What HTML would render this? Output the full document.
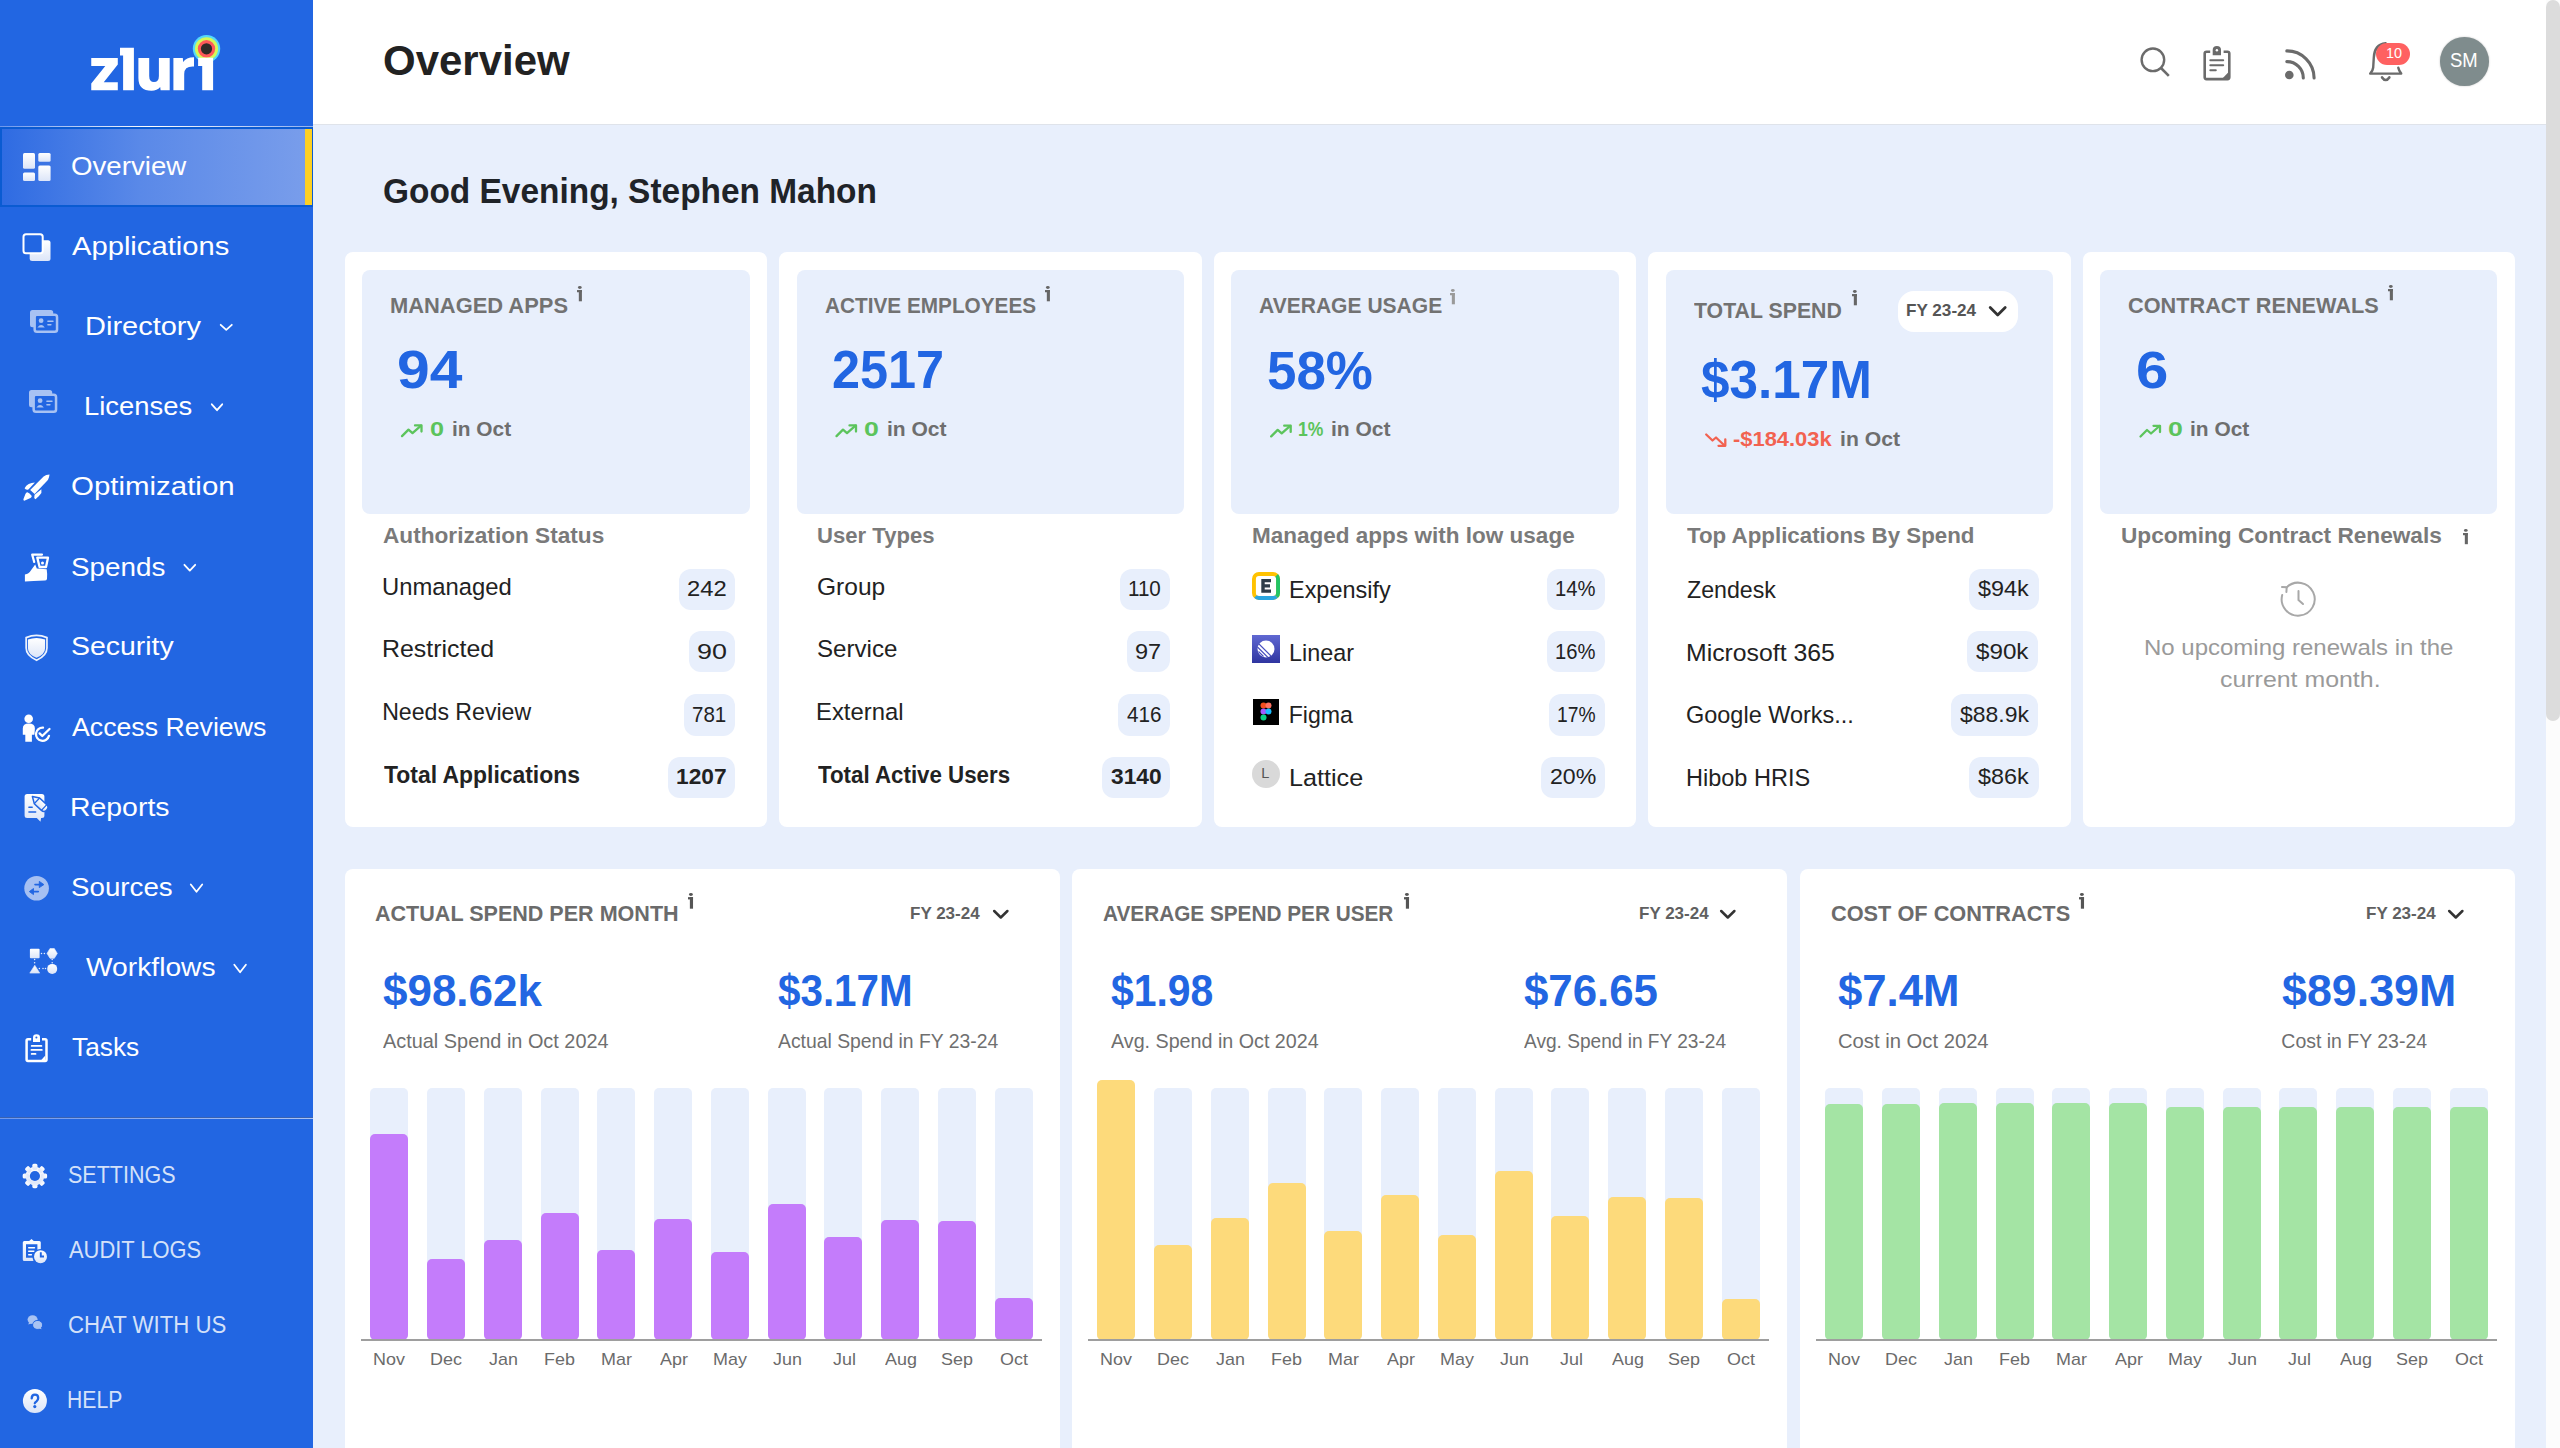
<!DOCTYPE html>
<html><head><meta charset="utf-8"><style>
html,body{margin:0;padding:0;}
body{width:2560px;height:1448px;overflow:hidden;position:relative;background:#e8effc;font-family:"Liberation Sans",sans-serif;}
.t{position:absolute;line-height:1;white-space:nowrap;transform-origin:0 0;}
.r{position:absolute;}
svg.r{overflow:visible;}
</style></head><body>
<div class="r" style="left:0px;top:0px;width:313px;height:1448px;background:#2266e2;"></div>
<div class="r" style="left:313px;top:0px;width:2233px;height:124px;background:#fff;"></div>
<div class="r" style="left:313px;top:124px;width:2233px;height:1px;background:#dfe3ea;"></div>
<div class="r" style="left:2546px;top:0px;width:14px;height:1448px;background:#fcfcfc;"></div>
<div class="r" style="left:2546px;top:0px;width:14px;height:721px;background:#dcdcdc;border-radius:7px;"></div>
<svg class="r" style="left:85px;top:30px" width="140" height="70" viewBox="0 0 140 70">
<g transform="translate(-85,-30)">
<circle cx="206.5" cy="48.8" r="13.7" fill="#55d9f8"/>
<circle cx="206.5" cy="48.8" r="11.6" fill="#d4f858"/>
<circle cx="206.5" cy="48.8" r="8.7" fill="#ff5859"/>
<circle cx="206.5" cy="48.8" r="5.6" fill="#2f2a27"/>
<polygon fill="#fff" points="91.25,58.1 117.8,58.1 117.8,64.4 103.75,82.2 117.8,82.2 117.8,90.3 91.25,90.3 91.25,83.4 105.3,66 91.25,66"/>
<polygon fill="#fff" points="120,47.8 133.9,47.8 133.9,90.3 123.1,90.3 123.1,55.6 120,55.6"/>
<path fill="#fff" d="M138.4,58.1 H149.2 V76 Q149.2,82 154,82 Q158.9,82 158.9,76 V58.1 H169.7 V90.3 H160.6 L160.2,87 Q157,90.8 151.5,90.8 Q138.4,90.8 138.4,78 Z"/>
<path fill="#fff" d="M173.4,58.1 H182.8 L183.2,62 Q186,57.3 194,57.3 V66.6 Q184.2,66 184.2,74 V90.3 H173.4 Z"/>
<polygon fill="#fff" points="198.1,57.7 213.1,57.7 213.1,90.3 202.2,90.3 202.2,66 198.1,66"/>
</g></svg>
<div class="r" style="left:0px;top:126px;width:313px;height:1px;background:linear-gradient(90deg,#6a96ec,#ffffff 48%,#8fb0f0);"></div>
<div class="r" style="left:0px;top:127px;width:313px;height:80px;background:linear-gradient(90deg,#2e6be2,#5a89e8 45%,#7a9eeb);box-shadow:inset 0 0 0 2px #0a5bd2;"></div>
<div class="r" style="left:305px;top:129px;width:7px;height:76px;background:#fdd023;"></div>
<svg class="r" style="left:20px;top:150px" width="34" height="34" viewBox="0 0 34 34"><defs><linearGradient id="wg" x1="0" y1="0" x2="0" y2="1"><stop offset="0" stop-color="#fff"/><stop offset="1" stop-color="#dce5f8"/></linearGradient></defs><g transform="translate(-20,-150)" fill="url(#wg)"><rect x="23" y="153" width="12" height="15.8" rx="1.5"/><rect x="38.3" y="153" width="12.3" height="8.7" rx="1.5"/><rect x="23" y="172.5" width="12" height="8.5" rx="1.5"/><rect x="38.3" y="165.5" width="12.3" height="15.5" rx="1.5"/></g></svg>
<svg class="r" style="left:20px;top:230px" width="34" height="34" viewBox="0 0 34 34"><g transform="translate(-20,-230)"><rect x="29.7" y="240.3" width="20.8" height="20.8" rx="2.5" fill="url(#wg)"/><rect x="23.5" y="234.2" width="19.2" height="19" rx="2.5" fill="#2266e2" stroke="#fff" stroke-width="2"/></g></svg>
<svg class="r" style="left:27.7px;top:308px" width="34" height="30" viewBox="0 0 34 30"><g transform="translate(2,2)"><rect x="0" y="0" width="23.2" height="17.2" rx="2.5" fill="#a8c2f3"/><rect x="4.65" y="4.85" width="22.4" height="16.9" rx="2.3" fill="#2266e2" stroke="#a8c2f3" stroke-width="2.5"/><circle cx="11.1" cy="10.7" r="2.4" fill="#a8c2f3"/><path d="M7.4,17.5 Q11.1,12.6 14.8,17.5 Z" fill="#a8c2f3"/><rect x="17.2" y="10.4" width="6.5" height="1.5" rx="0.7" fill="#a8c2f3"/><rect x="17.2" y="14.1" width="4.4" height="1.4" rx="0.7" fill="#a8c2f3"/></g></svg>
<svg class="r" style="left:27.4px;top:387.9px" width="34" height="30" viewBox="0 0 34 30"><g transform="translate(2,2)"><rect x="0" y="0" width="23.2" height="17.2" rx="2.5" fill="#a8c2f3"/><rect x="4.65" y="4.85" width="22.4" height="16.9" rx="2.3" fill="#2266e2" stroke="#a8c2f3" stroke-width="2.5"/><circle cx="11.1" cy="10.7" r="2.4" fill="#a8c2f3"/><path d="M7.4,17.5 Q11.1,12.6 14.8,17.5 Z" fill="#a8c2f3"/><rect x="17.2" y="10.4" width="6.5" height="1.5" rx="0.7" fill="#a8c2f3"/><rect x="17.2" y="14.1" width="4.4" height="1.4" rx="0.7" fill="#a8c2f3"/></g></svg>
<svg class="r" style="left:20px;top:470px" width="34" height="34" viewBox="0 0 34 34"><g transform="translate(-20,-470)" fill="#fff"><path d="M30.2,489.9 L43.6,476.5 Q46,474.8 49.5,474.6 Q49.3,477.8 47.9,479.9 L34.6,493.9 Z"/><path d="M24.6,488.3 Q26,485.5 28.7,484 Q31.5,482.6 34.9,482.4 L28.4,489.5 Q25.6,490.2 24.6,488.3 Z"/><path d="M41.4,489.2 L41.4,493 Q39,496.5 35.5,499.2 Q34.2,498.8 34.3,497.6 L34.6,494.8 Z"/><path d="M27.4,492.3 Q29.5,493 31.8,496.1 Q31.5,497.6 30.5,498 L24.3,500.7 Q23.2,500.3 23.4,499.2 L25.3,494.2 Q26,492.3 27.4,492.3 Z"/></g></svg>
<svg class="r" style="left:20px;top:550px" width="34" height="34" viewBox="0 0 34 34"><g transform="translate(-20,-550)"><path d="M42,554.6 L32.2,554.6 L34.2,562" fill="none" stroke="#fff" stroke-width="2.2" stroke-linecap="round" stroke-linejoin="round"/><path d="M37.3,557.7 L48,557.7 L46,567 L39.6,567 Z" fill="none" stroke="#fff" stroke-width="2.3" stroke-linejoin="round"/><circle cx="42.5" cy="563" r="1.5" fill="#fff"/><path d="M24.9,574.5 Q27,574 28,573.6 Q30,572 31.2,569.9 L35.2,564.6 L36.8,568.6 L46.7,569.2 Q47.5,574 47,578.9 Q46.5,580.4 44.8,580.4 L33.6,581 L24.9,581.4 Z" fill="#fff"/></g></svg>
<svg class="r" style="left:20px;top:630px" width="34" height="34" viewBox="0 0 34 34"><defs><linearGradient id="wg" x1="0" y1="0" x2="0" y2="1"><stop offset="0" stop-color="#fff"/><stop offset="1" stop-color="#dce5f8"/></linearGradient></defs><g transform="translate(-20,-630)"><path d="M26.15,637.6 Q36.5,633.3 46.95,637.6 V648 Q46.95,655.6 36.6,660.2 Q26.15,655.6 26.15,648 Z" fill="none" stroke="#eef3fd" stroke-width="1.7"/><path d="M27.9,639.6 Q36.5,636.2 45.1,639.6 V648 Q45.1,654.4 36.5,657.8 Q27.9,654.4 27.9,648 Z" fill="url(#wg)"/></g></svg>
<svg class="r" style="left:18px;top:712px" width="36" height="34" viewBox="0 0 36 34"><g transform="translate(-18,-712)"><circle cx="28.7" cy="718.7" r="4.3" fill="#fff"/><path d="M22.8,734.8 V728.6 Q22.8,723.6 28.8,723.6 Q34.9,723.6 34.9,728.6 L34.4,734.8 H31.9 V741.7 H25.3 V734.8 Z" fill="#fff"/><path d="M43,727.6 A6.6,6.6 0 1 0 49,735.8" fill="none" stroke="#fff" stroke-width="2.3" stroke-linecap="round"/><path d="M39.6,733.4 L42.3,736 L49.5,729" fill="none" stroke="#fff" stroke-width="2.3" stroke-linecap="round" stroke-linejoin="round"/></g></svg>
<svg class="r" style="left:20px;top:790px" width="34" height="34" viewBox="0 0 34 34"><defs><linearGradient id="wg" x1="0" y1="0" x2="0" y2="1"><stop offset="0" stop-color="#fff"/><stop offset="1" stop-color="#dce5f8"/></linearGradient></defs><g transform="translate(-20,-790)"><path d="M27.1,794 L41.9,794 Q44.4,794 44.4,796.5 L44.4,815.6 Q44.4,818.1 41.9,818.1 L41.1,818.1 L40.5,821.7 L36.8,818.1 L27.1,818.1 Q24.6,818.1 24.6,815.6 L24.6,796.5 Q24.6,794 27.1,794 Z" fill="url(#wg)"/><rect x="28.2" y="806.4" width="4.7" height="1.5" rx="0.7" fill="#2266e2"/><rect x="28.2" y="811.3" width="8.2" height="1.5" rx="0.7" fill="#2266e2"/><g transform="translate(32.4,796.6) rotate(43)"><path d="M0,0 L6.2,-3.9 H16 Q19.6,-3.9 19.6,0 Q19.6,3.9 16,3.9 H6.2 Z" fill="url(#wg)" stroke="#2266e2" stroke-width="1.5" stroke-linejoin="round"/><path d="M6.2,-3.9 V3.9 M16,-3.9 V3.9" stroke="#2266e2" stroke-width="1.3"/></g></g></svg>
<svg class="r" style="left:20px;top:872px" width="34" height="34" viewBox="0 0 34 34"><g transform="translate(-20,-872)"><circle cx="36.6" cy="888.2" r="12.3" fill="#a6c0f2"/><path d="M35,884.6 H40" stroke="#2266e2" stroke-width="1.6" stroke-linecap="round"/><path d="M39.3,881.4 L43.9,884.6 L39.3,887.6 Z" fill="#2266e2" stroke="#2266e2" stroke-width="0.9" stroke-linejoin="round"/><path d="M33,891.6 H38.3" stroke="#2266e2" stroke-width="1.6" stroke-linecap="round"/><path d="M33.5,888.5 L29.3,891.6 L33.5,894.6 Z" fill="#2266e2" stroke="#2266e2" stroke-width="0.9" stroke-linejoin="round"/></g></svg>
<svg class="r" style="left:26px;top:945px" width="36" height="34" viewBox="0 0 36 34"><defs><linearGradient id="wg" x1="0" y1="0" x2="0" y2="1"><stop offset="0" stop-color="#fff"/><stop offset="1" stop-color="#dce5f8"/></linearGradient></defs><g transform="translate(-26,-945)"><rect x="29.9" y="948.7" width="9.7" height="9.5" rx="1" fill="url(#wg)"/><path d="M50,948.5 L54.3,948.5 L57.3,953.4 L54.3,958.3 L50,958.3 L47,953.4 Z" fill="url(#wg)" stroke="#e8eefb" stroke-width="0.6" stroke-linejoin="round"/><path d="M34.8,965.2 L39.7,973.1 L29.8,973.1 Z" fill="url(#wg)" stroke="#e2e9f9" stroke-width="0.6" stroke-linejoin="round"/><circle cx="52.2" cy="968.9" r="5" fill="url(#wg)"/><g fill="#e6edfb"><circle cx="41.5" cy="953.4" r="0.75"/><circle cx="44.4" cy="953.4" r="0.75"/><circle cx="34.6" cy="959.6" r="0.75"/><circle cx="34.6" cy="962.7" r="0.75"/><circle cx="52.2" cy="959.6" r="0.75"/><circle cx="52.2" cy="962.7" r="0.75"/><circle cx="39.4" cy="968.6" r="0.75"/><circle cx="43" cy="968.6" r="0.75"/><circle cx="45.5" cy="968.6" r="0.75"/></g></g></svg>
<svg class="r" style="left:20px;top:1030px" width="34" height="36" viewBox="0 0 34 36"><g transform="translate(-20,-1030)" fill="#fff"><path d="M31.2,1039.3 H28 Q26.6,1039.3 26.6,1040.7 V1059.5 Q26.6,1060.9 28,1060.9 H45.1 Q46.5,1060.9 46.5,1059.5 V1040.7 Q46.5,1039.3 45.1,1039.3 H42" fill="none" stroke="#fff" stroke-width="2.5"/><path d="M33,1041.9 V1037.6 Q33,1034.3 36.5,1034.3 Q40,1034.3 40,1037.6 V1041.9 Z"/><circle cx="36.4" cy="1037.6" r="1" fill="#2266e2"/><rect x="30.8" y="1045" width="11.5" height="1.8" rx="0.9"/><rect x="30.5" y="1049" width="12.2" height="1.8" rx="0.9"/><rect x="30.8" y="1053" width="5.6" height="1.8" rx="0.9"/><path d="M45.3,1055.6 L45.3,1060 L41.3,1060 Z"/></g></svg>
<div class="r" style="left:0px;top:1117px;width:313px;height:1px;background:#3a62b0;"></div>
<div class="r" style="left:0px;top:1118px;width:313px;height:1px;background:linear-gradient(90deg,#6f98ee,#a8c2f5);"></div>
<svg class="r" style="left:20px;top:1160px" width="34" height="34" viewBox="0 0 34 34"><defs><linearGradient id="wg" x1="0" y1="0" x2="0" y2="1"><stop offset="0" stop-color="#fff"/><stop offset="1" stop-color="#dce5f8"/></linearGradient></defs><g transform="translate(14.9,16)" fill="url(#wg)"><circle r="9.3"/><rect x="-2.6" y="-12.2" width="5.2" height="6" rx="1.6" transform="rotate(0)"/><rect x="-2.6" y="-12.2" width="5.2" height="6" rx="1.6" transform="rotate(45)"/><rect x="-2.6" y="-12.2" width="5.2" height="6" rx="1.6" transform="rotate(90)"/><rect x="-2.6" y="-12.2" width="5.2" height="6" rx="1.6" transform="rotate(135)"/><rect x="-2.6" y="-12.2" width="5.2" height="6" rx="1.6" transform="rotate(180)"/><rect x="-2.6" y="-12.2" width="5.2" height="6" rx="1.6" transform="rotate(225)"/><rect x="-2.6" y="-12.2" width="5.2" height="6" rx="1.6" transform="rotate(270)"/><rect x="-2.6" y="-12.2" width="5.2" height="6" rx="1.6" transform="rotate(315)"/><circle r="5.1" fill="#2266e2"/></g></svg>
<svg class="r" style="left:20px;top:1235px" width="34" height="34" viewBox="0 0 34 34"><defs><linearGradient id="wg" x1="0" y1="0" x2="0" y2="1"><stop offset="0" stop-color="#fff"/><stop offset="1" stop-color="#dce5f8"/></linearGradient></defs><g transform="translate(-20,-1235)"><path d="M24.3,1240.9 H29.2 L31.5,1238.9 L33.8,1240.9 H39.3 Q40.8,1240.9 40.8,1242.4 V1250 L37.4,1252 V1244.3 H26 V1257.7 H32.5 L33.5,1261.1 H24.3 Q22.8,1261.1 22.8,1259.6 V1242.4 Q22.8,1240.9 24.3,1240.9 Z" fill="url(#wg)"/><rect x="28" y="1247" width="7.2" height="1.5" rx="0.7" fill="#fff"/><rect x="28" y="1250.4" width="6.6" height="1.5" rx="0.7" fill="#fff"/><rect x="28" y="1254" width="4.1" height="1.5" rx="0.7" fill="#fff"/><circle cx="40.5" cy="1256.7" r="7.6" fill="#2266e2"/><circle cx="40.5" cy="1256.7" r="6.5" fill="url(#wg)"/><path d="M40.8,1252.3 V1256.5 H44" fill="none" stroke="#2266e2" stroke-width="1.9"/></g></svg>
<svg class="r" style="left:24px;top:1312px" width="22" height="22" viewBox="0 0 22 22"><g transform="translate(-24,-1312)" fill="#a9c3f3"><ellipse cx="32.6" cy="1319.6" rx="5" ry="4.3"/><path d="M29,1322.5 L28.3,1324.6 L31.5,1323.5 Z"/><g stroke="#2266e2" stroke-width="1.1"><ellipse cx="37.6" cy="1324.9" rx="4.8" ry="4.3"/></g><ellipse cx="37.6" cy="1324.9" rx="4.4" ry="3.9"/><path d="M40.5,1327 L41.6,1329.3 L38.6,1328.3 Z"/></g></svg>
<svg class="r" style="left:20px;top:1385px" width="34" height="34" viewBox="0 0 34 34"><defs><linearGradient id="wg" x1="0" y1="0" x2="0" y2="1"><stop offset="0" stop-color="#fff"/><stop offset="1" stop-color="#dce5f8"/></linearGradient></defs><g transform="translate(-20,-1385)"><circle cx="34.9" cy="1400.9" r="12" fill="url(#wg)"/><path d="M31.7,1398.4 Q31.7,1394.7 34.9,1394.7 Q38.2,1394.7 38.2,1397.9 Q38.2,1399.9 36.5,1401.3 Q34.8,1402.6 34.8,1403.3" fill="none" stroke="#2266e2" stroke-width="2.3" stroke-linecap="round"/><circle cx="34.8" cy="1406.6" r="1.6" fill="#2266e2"/></g></svg>
<div class="t" style="left:71.36px;top:152.75px;font-size:26.16px;font-weight:400;color:#fff;transform:scaleX(1.0572);">Overview</div>
<div class="t" style="left:72.30px;top:233.15px;font-size:26.16px;font-weight:400;color:#fff;transform:scaleX(1.1149);">Applications</div>
<div class="t" style="left:84.98px;top:313.35px;font-size:26.16px;font-weight:400;color:#fff;transform:scaleX(1.1086);">Directory</div>
<div class="t" style="left:84.41px;top:393.15px;font-size:26.16px;font-weight:400;color:#fff;transform:scaleX(1.0469);">Licenses</div>
<div class="t" style="left:70.77px;top:472.85px;font-size:26.16px;font-weight:400;color:#fff;transform:scaleX(1.1256);">Optimization</div>
<div class="t" style="left:70.85px;top:553.65px;font-size:26.16px;font-weight:400;color:#fff;transform:scaleX(1.0635);">Spends</div>
<div class="t" style="left:70.72px;top:633.25px;font-size:26.16px;font-weight:400;color:#fff;transform:scaleX(1.0872);">Security</div>
<div class="t" style="left:72.40px;top:713.85px;font-size:26.16px;font-weight:400;color:#fff;transform:scaleX(1.0203);">Access Reviews</div>
<div class="t" style="left:70.13px;top:793.85px;font-size:26.16px;font-weight:400;color:#fff;transform:scaleX(1.0863);">Reports</div>
<div class="t" style="left:71.15px;top:874.05px;font-size:26.16px;font-weight:400;color:#fff;transform:scaleX(1.0594);">Sources</div>
<div class="t" style="left:86.36px;top:954.25px;font-size:26.16px;font-weight:400;color:#fff;transform:scaleX(1.0783);">Workflows</div>
<div class="t" style="left:71.87px;top:1034.35px;font-size:26.16px;font-weight:400;color:#fff;transform:scaleX(1.0060);">Tasks</div>
<svg class="r" style="left:217px;top:322px" width="17" height="11" viewBox="0 0 17 11"><path d="M3.7000000000000055,2.8 L9.25,7.899999999999989 L14.799999999999994,2.8" fill="none" stroke="#fff" stroke-width="1.8" stroke-linecap="round" stroke-linejoin="round"/></svg>
<svg class="r" style="left:209px;top:401px" width="17" height="12" viewBox="0 0 17 12"><path d="M2.8,3.3 L8.0,9.2 L13.2,3.3" fill="none" stroke="#fff" stroke-width="1.8" stroke-linecap="round" stroke-linejoin="round"/></svg>
<svg class="r" style="left:181px;top:562px" width="17" height="12" viewBox="0 0 17 12"><path d="M3.399999999999994,2.8 L8.800000000000011,8.599999999999977 L14.2,2.8" fill="none" stroke="#fff" stroke-width="1.8" stroke-linecap="round" stroke-linejoin="round"/></svg>
<svg class="r" style="left:188px;top:881px" width="18" height="13" viewBox="0 0 18 13"><path d="M2.8,3.5000000000000453 L8.5,10.800000000000022 L14.2,3.5000000000000453" fill="none" stroke="#fff" stroke-width="1.8" stroke-linecap="round" stroke-linejoin="round"/></svg>
<svg class="r" style="left:231px;top:961px" width="18" height="14" viewBox="0 0 18 14"><path d="M3.3,3.699999999999977 L9.099999999999994,11.2 L14.899999999999988,3.699999999999977" fill="none" stroke="#fff" stroke-width="1.8" stroke-linecap="round" stroke-linejoin="round"/></svg>
<div class="t" style="left:67.73px;top:1164.21px;font-size:23.26px;font-weight:400;color:#d4e1f9;transform:scaleX(0.9248);">SETTINGS</div>
<div class="t" style="left:68.70px;top:1239.11px;font-size:23.26px;font-weight:400;color:#d4e1f9;transform:scaleX(0.9411);">AUDIT LOGS</div>
<div class="t" style="left:67.59px;top:1313.81px;font-size:23.26px;font-weight:400;color:#d4e1f9;transform:scaleX(0.9554);">CHAT WITH US</div>
<div class="t" style="left:67.01px;top:1388.51px;font-size:23.26px;font-weight:400;color:#d4e1f9;transform:scaleX(0.9103);">HELP</div>
<div class="t" style="left:383.12px;top:39.25px;font-size:42.59px;font-weight:700;color:#222;transform:scaleX(0.9856);">Overview</div>
<svg class="r" style="left:2135px;top:42px" width="40" height="40" viewBox="0 0 40 40"><g transform="translate(-2135,-42)" fill="none" stroke="#6b6b6b" stroke-width="2.4"><circle cx="2152.9" cy="59.8" r="11.3"/><path d="M2161,68 L2168.8,75.8" stroke-linecap="butt" stroke-width="2.6"/></g></svg>
<svg class="r" style="left:2198px;top:42px" width="40" height="44" viewBox="0 0 40 44"><g transform="translate(-2198,-42)" fill="#6b6b6b"><path d="M2210.2,51.7 H2206.5 Q2204.7,51.7 2204.7,53.5 V77.3 Q2204.7,79.1 2206.5,79.1 H2227.5 Q2229.3,79.1 2229.3,77.3 V53.5 Q2229.3,51.7 2227.5,51.7 H2223.6" fill="none" stroke="#6b6b6b" stroke-width="2.6"/><path d="M2212.7,55.2 V50 Q2212.7,46.1 2216.9,46.1 Q2221,46.1 2221,50 V55.2 Z"/><circle cx="2216.9" cy="50.3" r="1.2" fill="#fff"/><rect x="2209.3" y="59.2" width="14.9" height="2" rx="1"/><rect x="2209.3" y="64.2" width="14.9" height="2" rx="1"/><rect x="2209.3" y="69.3" width="7.5" height="2" rx="1"/><path d="M2228.2,72.5 V78.2 H2222.6 Z"/></g></svg>
<svg class="r" style="left:2280px;top:44px" width="42" height="42" viewBox="0 0 42 42"><g transform="translate(-2280,-44)" fill="none" stroke="#6b6b6b" stroke-width="3.1" stroke-linecap="round"><circle cx="2289.3" cy="75" r="4.3" fill="#6b6b6b" stroke="none"/><path d="M2286.8,61.6 A16.3,16.3 0 0 1 2303.3,78"/><path d="M2286.8,50.9 A27.2,27.2 0 0 1 2314.1,78"/></g></svg>
<svg class="r" style="left:2364px;top:38px" width="50" height="50" viewBox="0 0 50 50"><g transform="translate(-2364,-38)" fill="none" stroke="#6b6b6b" stroke-width="2.4" stroke-linejoin="round" stroke-linecap="round"><path d="M2385.6,43.2 Q2374.3,44.5 2373.8,57.5 L2373.2,67.5 Q2372.8,71 2370.2,73.6 L2401.2,73.6 Q2398.8,70.5 2398.3,67.8"/><path d="M2382.1,77.4 Q2385.7,82.6 2389.3,77.4" stroke-width="2.7"/></g></svg>
<div class="r" style="left:2376px;top:43px;width:34.40000000000009px;height:21.700000000000003px;background:#ff6161;border-radius:11px;"></div>
<div class="t" style="left:2385.52px;top:46.17px;font-size:14.10px;font-weight:400;color:#fff;transform:scaleX(1.0214);">10</div>
<div class="r" style="left:2440px;top:37.4px;width:48.6px;height:48.6px;border-radius:50%;background:#7f8c8d;box-shadow:0 0 2px rgba(0,0,0,0.25)"></div>
<div class="t" style="left:2450.47px;top:51.29px;font-size:19.62px;font-weight:400;color:#fff;transform:scaleX(0.9411);">SM</div>
<div class="t" style="left:382.86px;top:173.77px;font-size:34.88px;font-weight:700;color:#1f2328;transform:scaleX(0.9584);">Good Evening, Stephen Mahon</div>
<div class="r" style="left:345px;top:252px;width:422px;height:575px;background:#fff;border-radius:8px;"></div>
<div class="r" style="left:362px;top:270px;width:388px;height:244px;background:#e8effc;border-radius:8px;"></div>
<div class="r" style="left:779px;top:252px;width:423px;height:575px;background:#fff;border-radius:8px;"></div>
<div class="r" style="left:797px;top:270px;width:387px;height:244px;background:#e8effc;border-radius:8px;"></div>
<div class="r" style="left:1214px;top:252px;width:422px;height:575px;background:#fff;border-radius:8px;"></div>
<div class="r" style="left:1231px;top:270px;width:388px;height:244px;background:#e8effc;border-radius:8px;"></div>
<div class="r" style="left:1648px;top:252px;width:423px;height:575px;background:#fff;border-radius:8px;"></div>
<div class="r" style="left:1666px;top:270px;width:387px;height:244px;background:#e8effc;border-radius:8px;"></div>
<div class="r" style="left:2083px;top:252px;width:432px;height:575px;background:#fff;border-radius:8px;"></div>
<div class="r" style="left:2100px;top:270px;width:397px;height:244px;background:#e8effc;border-radius:8px;"></div>
<div class="t" style="left:390.08px;top:295.10px;font-size:22.09px;font-weight:700;color:#727272;transform:scaleX(0.9915);">MANAGED APPS</div>
<svg class="r" style="left:577.10px;top:285.70px" width="6" height="17" viewBox="0 0 6 17"><g fill="#666" transform="scale(0.962)"><ellipse cx="2.95" cy="1.5" rx="1.95" ry="1.5"/><rect x="0" y="4.2" width="5.1" height="2.3"/><rect x="1.9" y="4.2" width="3.2" height="11.7"/></g></svg>
<div class="t" style="left:824.98px;top:295.10px;font-size:22.09px;font-weight:700;color:#727272;transform:scaleX(0.9406);">ACTIVE EMPLOYEES</div>
<svg class="r" style="left:1045.20px;top:285.70px" width="6" height="17" viewBox="0 0 6 17"><g fill="#666" transform="scale(0.962)"><ellipse cx="2.95" cy="1.5" rx="1.95" ry="1.5"/><rect x="0" y="4.2" width="5.1" height="2.3"/><rect x="1.9" y="4.2" width="3.2" height="11.7"/></g></svg>
<div class="t" style="left:1259.17px;top:295.10px;font-size:22.09px;font-weight:700;color:#727272;transform:scaleX(0.9534);">AVERAGE USAGE</div>
<svg class="r" style="left:1450.20px;top:289.30px" width="6" height="17" viewBox="0 0 6 17"><g fill="#9a9a9a" transform="scale(0.962)"><ellipse cx="2.95" cy="1.5" rx="1.95" ry="1.5"/><rect x="0" y="4.2" width="5.1" height="2.3"/><rect x="1.9" y="4.2" width="3.2" height="11.7"/></g></svg>
<div class="t" style="left:1693.99px;top:300.00px;font-size:22.09px;font-weight:700;color:#727272;transform:scaleX(0.9643);">TOTAL SPEND</div>
<svg class="r" style="left:1851.50px;top:290.30px" width="6" height="17" viewBox="0 0 6 17"><g fill="#666" transform="scale(0.962)"><ellipse cx="2.95" cy="1.5" rx="1.95" ry="1.5"/><rect x="0" y="4.2" width="5.1" height="2.3"/><rect x="1.9" y="4.2" width="3.2" height="11.7"/></g></svg>
<div class="t" style="left:2127.83px;top:295.10px;font-size:22.09px;font-weight:700;color:#727272;transform:scaleX(0.9829);">CONTRACT RENEWALS</div>
<svg class="r" style="left:2387.90px;top:285.00px" width="6" height="17" viewBox="0 0 6 17"><g fill="#666" transform="scale(0.962)"><ellipse cx="2.95" cy="1.5" rx="1.95" ry="1.5"/><rect x="0" y="4.2" width="5.1" height="2.3"/><rect x="1.9" y="4.2" width="3.2" height="11.7"/></g></svg>
<div class="t" style="left:396.54px;top:343.25px;font-size:53.92px;font-weight:700;color:#2266e2;transform:scaleX(1.0901);">94</div>
<div class="t" style="left:832.24px;top:343.25px;font-size:53.92px;font-weight:700;color:#2266e2;transform:scaleX(0.9341);">2517</div>
<div class="t" style="left:1266.51px;top:343.75px;font-size:53.34px;font-weight:700;color:#2266e2;transform:scaleX(0.9918);">58%</div>
<div class="t" style="left:1701.03px;top:353.54px;font-size:52.76px;font-weight:700;color:#2266e2;transform:scaleX(0.9707);">$3.17M</div>
<div class="t" style="left:2135.76px;top:344.98px;font-size:51.89px;font-weight:700;color:#2266e2;transform:scaleX(1.1205);">6</div>
<svg class="r" style="left:400px;top:422px" width="24" height="16" viewBox="0 0 24 16"><g transform="translate(-400,-422)" fill="none" stroke="#5cc45c" stroke-width="2.3" stroke-linejoin="round" stroke-linecap="round"><path d="M402.0,436.1 L408.5,429.6 L412.5,433.1 L421.0,425.6"/><path d="M415.0,425.40000000000003 L421.5,425.40000000000003 L421.5,431.6"/></g></svg>
<div class="t" style="left:429.99px;top:419.59px;font-size:19.62px;font-weight:700;color:#5cc45c;transform:scaleX(1.2875);">0</div>
<div class="t" style="left:451.94px;top:419.59px;font-size:19.62px;font-weight:700;color:#6e6e6e;transform:scaleX(1.0637);">in Oct</div>
<svg class="r" style="left:835px;top:422px" width="24" height="16" viewBox="0 0 24 16"><g transform="translate(-835,-422)" fill="none" stroke="#5cc45c" stroke-width="2.3" stroke-linejoin="round" stroke-linecap="round"><path d="M836.5,436.1 L843,429.6 L847,433.1 L855.5,425.6"/><path d="M849.5,425.40000000000003 L856,425.40000000000003 L856,431.6"/></g></svg>
<div class="t" style="left:863.93px;top:419.59px;font-size:19.62px;font-weight:700;color:#5cc45c;transform:scaleX(1.3626);">0</div>
<div class="t" style="left:886.73px;top:419.59px;font-size:19.62px;font-weight:700;color:#6e6e6e;transform:scaleX(1.0711);">in Oct</div>
<svg class="r" style="left:1269px;top:422px" width="24" height="16" viewBox="0 0 24 16"><g transform="translate(-1269,-422)" fill="none" stroke="#5cc45c" stroke-width="2.3" stroke-linejoin="round" stroke-linecap="round"><path d="M1271.2,436.4 L1277.7,429.9 L1281.7,433.4 L1290.2,425.9"/><path d="M1284.2,425.7 L1290.7,425.7 L1290.7,431.9"/></g></svg>
<div class="t" style="left:1298.15px;top:418.57px;font-size:20.35px;font-weight:700;color:#5cc45c;transform:scaleX(0.8636);">1%</div>
<div class="t" style="left:1331.33px;top:418.57px;font-size:20.35px;font-weight:700;color:#6e6e6e;transform:scaleX(1.0329);">in Oct</div>
<div class="t" style="left:1839.62px;top:428.51px;font-size:20.78px;font-weight:700;color:#6e6e6e;transform:scaleX(1.0200);">in Oct</div>
<svg class="r" style="left:2139px;top:423px" width="24" height="16" viewBox="0 0 24 16"><g transform="translate(-2139,-423)" fill="none" stroke="#5cc45c" stroke-width="2.3" stroke-linejoin="round" stroke-linecap="round"><path d="M2140.5,436.5 L2147,430 L2151,433.5 L2159.5,426"/><path d="M2153.5,425.8 L2160,425.8 L2160,432"/></g></svg>
<div class="t" style="left:2167.53px;top:419.59px;font-size:19.62px;font-weight:700;color:#5cc45c;transform:scaleX(1.3626);">0</div>
<div class="t" style="left:2189.84px;top:419.59px;font-size:19.62px;font-weight:700;color:#6e6e6e;transform:scaleX(1.0656);">in Oct</div>
<svg class="r" style="left:1703px;top:431px" width="26" height="18" viewBox="0 0 26 18"><g transform="translate(-1703,-431)" fill="none" stroke="#f26250" stroke-width="2.3" stroke-linejoin="round" stroke-linecap="round"><path d="M1706.2,434.5 L1712.5,440.5 L1716,437.5 L1724.5,445.5"/><path d="M1718.5,445.8 L1725.3,445.8 L1725.3,439.5"/></g></svg>
<div class="t" style="left:1733.02px;top:428.51px;font-size:20.78px;font-weight:700;color:#f26250;transform:scaleX(1.0549);">-$184.03k</div>
<div class="r" style="left:1898.3px;top:291px;width:119.90000000000009px;height:40.69999999999999px;background:#fff;border-radius:16px;"></div>
<div class="t" style="left:1906.49px;top:302.42px;font-size:16.28px;font-weight:700;color:#555;transform:scaleX(1.0531);">FY 23-24</div>
<svg class="r" style="left:1987px;top:303px" width="22" height="16" viewBox="0 0 22 16"><path d="M3.2,4.5 L10.7,12 L18.2,4.5" fill="none" stroke="#333" stroke-width="2.8" stroke-linecap="round" stroke-linejoin="round"/></svg>
<div class="t" style="left:383.43px;top:525.24px;font-size:21.80px;font-weight:700;color:#7a7a7a;transform:scaleX(1.0383);">Authorization Status</div>
<div class="t" style="left:817.07px;top:525.24px;font-size:21.80px;font-weight:700;color:#7a7a7a;transform:scaleX(1.0141);">User Types</div>
<div class="t" style="left:1251.54px;top:525.24px;font-size:21.80px;font-weight:700;color:#7a7a7a;transform:scaleX(1.0326);">Managed apps with low usage</div>
<div class="t" style="left:1687.38px;top:525.24px;font-size:21.80px;font-weight:700;color:#7a7a7a;transform:scaleX(1.0233);">Top Applications By Spend</div>
<div class="t" style="left:2120.84px;top:525.24px;font-size:21.80px;font-weight:700;color:#7a7a7a;transform:scaleX(1.0389);">Upcoming Contract Renewals</div>
<svg class="r" style="left:2463.30px;top:528.50px" width="6" height="17" viewBox="0 0 6 17"><g fill="#666" transform="scale(0.956)"><ellipse cx="2.95" cy="1.5" rx="1.95" ry="1.5"/><rect x="0" y="4.2" width="5.1" height="2.3"/><rect x="1.9" y="4.2" width="3.2" height="11.7"/></g></svg>
<div class="t" style="left:382.21px;top:575.84px;font-size:23.11px;font-weight:400;color:#222;transform:scaleX(1.0300);">Unmanaged</div>
<div class="r" style="left:679px;top:568.8px;width:56.299999999999955px;height:41.0px;background:#e8effc;border-radius:12px;"></div>
<div class="t" style="left:687.31px;top:577.41px;font-size:22.67px;font-weight:400;color:#222;transform:scaleX(1.0511);">242</div>
<div class="t" style="left:382.01px;top:638.44px;font-size:23.11px;font-weight:400;color:#222;transform:scaleX(1.0778);">Restricted</div>
<div class="r" style="left:688.6px;top:631.4px;width:46.69999999999993px;height:41.10000000000002px;background:#e8effc;border-radius:12px;"></div>
<div class="t" style="left:696.89px;top:640.01px;font-size:22.67px;font-weight:400;color:#222;transform:scaleX(1.1861);">90</div>
<div class="t" style="left:382.15px;top:701.14px;font-size:23.11px;font-weight:400;color:#222;">Needs Review</div>
<div class="r" style="left:684px;top:694.1px;width:51.299999999999955px;height:41.5px;background:#e8effc;border-radius:12px;"></div>
<div class="t" style="left:692.47px;top:702.71px;font-size:22.67px;font-weight:400;color:#222;transform:scaleX(0.9073);">781</div>
<div class="t" style="left:383.77px;top:763.84px;font-size:23.11px;font-weight:700;color:#222;transform:scaleX(0.9911);">Total Applications</div>
<div class="r" style="left:668px;top:756.8px;width:67.29999999999995px;height:41.40000000000009px;background:#e8effc;border-radius:12px;"></div>
<div class="t" style="left:676.14px;top:765.41px;font-size:22.67px;font-weight:700;color:#222;transform:scaleX(1.0024);">1207</div>
<div class="t" style="left:817.17px;top:575.84px;font-size:23.11px;font-weight:400;color:#222;transform:scaleX(1.0617);">Group</div>
<div class="r" style="left:1120.2px;top:568.8px;width:49.59999999999991px;height:41.0px;background:#e8effc;border-radius:12px;"></div>
<div class="t" style="left:1128.15px;top:577.41px;font-size:22.67px;font-weight:400;color:#222;transform:scaleX(0.9088);">110</div>
<div class="t" style="left:817.32px;top:638.44px;font-size:23.11px;font-weight:400;color:#222;transform:scaleX(1.0425);">Service</div>
<div class="r" style="left:1126.9px;top:631.4px;width:42.899999999999864px;height:41.10000000000002px;background:#e8effc;border-radius:12px;"></div>
<div class="t" style="left:1135.34px;top:640.01px;font-size:22.67px;font-weight:400;color:#222;transform:scaleX(1.0385);">97</div>
<div class="t" style="left:816.49px;top:701.14px;font-size:23.11px;font-weight:400;color:#222;transform:scaleX(1.0314);">External</div>
<div class="r" style="left:1117.6px;top:694.1px;width:52.200000000000045px;height:41.5px;background:#e8effc;border-radius:12px;"></div>
<div class="t" style="left:1126.69px;top:702.71px;font-size:22.67px;font-weight:400;color:#222;transform:scaleX(0.9123);">416</div>
<div class="t" style="left:818.18px;top:763.84px;font-size:23.11px;font-weight:700;color:#222;transform:scaleX(0.9649);">Total Active Users</div>
<div class="r" style="left:1101.5px;top:756.8px;width:68.29999999999995px;height:41.40000000000009px;background:#e8effc;border-radius:12px;"></div>
<div class="t" style="left:1110.54px;top:765.41px;font-size:22.67px;font-weight:700;color:#222;transform:scaleX(1.0043);">3140</div>
<div class="t" style="left:1288.72px;top:578.84px;font-size:23.11px;font-weight:400;color:#222;transform:scaleX(1.0149);">Expensify</div>
<div class="r" style="left:1547.4px;top:568.8px;width:57.19999999999982px;height:41.0px;background:#e8effc;border-radius:12px;"></div>
<div class="t" style="left:1555.38px;top:577.41px;font-size:22.67px;font-weight:400;color:#222;transform:scaleX(0.8914);">14%</div>
<div class="t" style="left:1288.73px;top:641.94px;font-size:23.11px;font-weight:400;color:#222;transform:scaleX(1.0104);">Linear</div>
<div class="r" style="left:1547.4px;top:631.4px;width:57.19999999999982px;height:41.10000000000002px;background:#e8effc;border-radius:12px;"></div>
<div class="t" style="left:1555.38px;top:640.01px;font-size:22.67px;font-weight:400;color:#222;transform:scaleX(0.8914);">16%</div>
<div class="t" style="left:1288.75px;top:704.14px;font-size:23.11px;font-weight:400;color:#222;">Figma</div>
<div class="r" style="left:1549.2px;top:694.1px;width:55.399999999999864px;height:41.5px;background:#e8effc;border-radius:12px;"></div>
<div class="t" style="left:1557.26px;top:702.71px;font-size:22.67px;font-weight:400;color:#222;transform:scaleX(0.8494);">17%</div>
<div class="t" style="left:1288.59px;top:766.74px;font-size:23.11px;font-weight:400;color:#222;transform:scaleX(1.0890);">Lattice</div>
<div class="r" style="left:1541.3px;top:756.8px;width:63.299999999999955px;height:41.40000000000009px;background:#e8effc;border-radius:12px;"></div>
<div class="t" style="left:1549.64px;top:765.41px;font-size:22.67px;font-weight:400;color:#222;transform:scaleX(1.0202);">20%</div>
<div class="t" style="left:1686.90px;top:578.84px;font-size:23.11px;font-weight:400;color:#222;transform:scaleX(1.0030);">Zendesk</div>
<div class="r" style="left:1969px;top:568.8px;width:69.5px;height:41.0px;background:#e8effc;border-radius:12px;"></div>
<div class="t" style="left:1978.27px;top:577.41px;font-size:22.67px;font-weight:400;color:#222;transform:scaleX(1.0311);">$94k</div>
<div class="t" style="left:1685.62px;top:641.94px;font-size:23.11px;font-weight:400;color:#222;transform:scaleX(1.0729);">Microsoft 365</div>
<div class="r" style="left:1967.2px;top:631.4px;width:71.29999999999995px;height:41.10000000000002px;background:#e8effc;border-radius:12px;"></div>
<div class="t" style="left:1976.46px;top:640.01px;font-size:22.67px;font-weight:400;color:#222;transform:scaleX(1.0679);">$90k</div>
<div class="t" style="left:1686.43px;top:704.14px;font-size:23.11px;font-weight:400;color:#222;transform:scaleX(1.0159);">Google Works...</div>
<div class="r" style="left:1950.7px;top:694.1px;width:87.79999999999995px;height:41.5px;background:#e8effc;border-radius:12px;"></div>
<div class="t" style="left:1959.97px;top:702.71px;font-size:22.67px;font-weight:400;color:#222;transform:scaleX(1.0131);">$88.9k</div>
<div class="t" style="left:1685.72px;top:766.74px;font-size:23.11px;font-weight:400;color:#222;transform:scaleX(1.0173);">Hibob HRIS</div>
<div class="r" style="left:1969px;top:756.8px;width:69.5px;height:41.40000000000009px;background:#e8effc;border-radius:12px;"></div>
<div class="t" style="left:1978.27px;top:765.41px;font-size:22.67px;font-weight:400;color:#222;transform:scaleX(1.0311);">$86k</div>
<svg class="r" style="left:1252px;top:572px" width="28" height="28" viewBox="0 0 28 28"><defs><clipPath id="cpg"><polygon points="14,14 28,0 28,28"/></clipPath><clipPath id="cpb"><polygon points="14,14 28,28 0,28"/></clipPath></defs><rect x="1.95" y="1.95" width="24.1" height="24" rx="5" fill="#fff" stroke="#ffc200" stroke-width="3.9"/><rect x="1.95" y="1.95" width="24.1" height="24" rx="5" fill="none" stroke="#22c466" stroke-width="3.9" clip-path="url(#cpg)"/><rect x="1.95" y="1.95" width="24.1" height="24" rx="5" fill="none" stroke="#2aa6e0" stroke-width="3.9" clip-path="url(#cpb)"/><path d="M9.3,7 H19 V10.3 H12.7 V12.3 H18 V15.4 H12.7 V17.5 H19 V20.8 H9.3 Z" fill="#2e3d49"/></svg>
<svg class="r" style="left:1252px;top:635px" width="28" height="28" viewBox="0 0 28 28"><defs><linearGradient id="lg" x1="0" y1="0" x2="0" y2="1"><stop offset="0" stop-color="#6068d2"/><stop offset="1" stop-color="#2f35a0"/></linearGradient></defs><rect x="0" y="0" width="28" height="28" fill="url(#lg)"/><circle cx="14" cy="14" r="8.5" fill="#fff"/><path d="M5.5,12 L16,22.5 M6.5,16.5 L11.5,21.5 M7,9 L19,21" stroke="#4a50c0" stroke-width="1.1"/></svg>
<svg class="r" style="left:1253px;top:699px" width="26" height="26" viewBox="0 0 26 26"><rect width="26" height="26" fill="#000"/><circle cx="10.5" cy="6.5" r="3" fill="#f24e1e"/><circle cx="15.5" cy="6.5" r="3" fill="#ff7262"/><circle cx="10.5" cy="12.5" r="3" fill="#a259ff"/><circle cx="15.5" cy="12.5" r="3" fill="#1abcfe"/><circle cx="10.5" cy="18.5" r="3" fill="#0acf83"/></svg>
<div class="r" style="left:1252px;top:760.2px;width:28px;height:28px;border-radius:50%;background:#d9d9d9"></div>
<div class="t" style="left:1261.14px;top:766.20px;font-size:14.53px;font-weight:400;color:#555;">L</div>
<svg class="r" style="left:2276px;top:578px" width="44" height="44" viewBox="0 0 44 44"><g fill="none" stroke="#a8a8a8" stroke-width="2" stroke-linecap="round"><path d="M10.5,9.5 A16.5,16.5 0 1 1 6.2,17"/><path d="M6,9 L10.7,9.3 L10.4,14"/><path d="M22.5,13 V22 L27,26"/></g></svg>
<div class="t" style="left:2143.98px;top:637.00px;font-size:22.09px;font-weight:400;color:#9a9a9a;transform:scaleX(1.0867);">No upcoming renewals in the</div>
<div class="t" style="left:2219.50px;top:668.50px;font-size:22.09px;font-weight:400;color:#9a9a9a;transform:scaleX(1.1280);">current month.</div>
<div class="r" style="left:345px;top:869px;width:715px;height:591px;background:#fff;border-radius:8px;"></div>
<div class="r" style="left:1072px;top:869px;width:715px;height:591px;background:#fff;border-radius:8px;"></div>
<div class="r" style="left:1800px;top:869px;width:715px;height:591px;background:#fff;border-radius:8px;"></div>
<div class="t" style="left:375.06px;top:901.98px;font-size:22.82px;font-weight:700;color:#6b6b6b;transform:scaleX(0.9444);">ACTUAL SPEND PER MONTH</div>
<svg class="r" style="left:688.00px;top:892.80px" width="6" height="17" viewBox="0 0 6 17"><g fill="#555" transform="scale(0.987)"><ellipse cx="2.95" cy="1.5" rx="1.95" ry="1.5"/><rect x="0" y="4.2" width="5.1" height="2.3"/><rect x="1.9" y="4.2" width="3.2" height="11.7"/></g></svg>
<div class="t" style="left:1103.08px;top:901.98px;font-size:22.82px;font-weight:700;color:#6b6b6b;transform:scaleX(0.9101);">AVERAGE SPEND PER USER</div>
<svg class="r" style="left:1403.80px;top:892.80px" width="6" height="17" viewBox="0 0 6 17"><g fill="#555" transform="scale(0.987)"><ellipse cx="2.95" cy="1.5" rx="1.95" ry="1.5"/><rect x="0" y="4.2" width="5.1" height="2.3"/><rect x="1.9" y="4.2" width="3.2" height="11.7"/></g></svg>
<div class="t" style="left:1830.93px;top:901.98px;font-size:22.82px;font-weight:700;color:#6b6b6b;transform:scaleX(0.9530);">COST OF CONTRACTS</div>
<svg class="r" style="left:2079.20px;top:892.80px" width="6" height="17" viewBox="0 0 6 17"><g fill="#555" transform="scale(0.987)"><ellipse cx="2.95" cy="1.5" rx="1.95" ry="1.5"/><rect x="0" y="4.2" width="5.1" height="2.3"/><rect x="1.9" y="4.2" width="3.2" height="11.7"/></g></svg>
<div class="t" style="left:909.99px;top:905.77px;font-size:16.57px;font-weight:700;color:#606060;transform:scaleX(1.0271);">FY 23-24</div>
<svg class="r" style="left:991px;top:906px" width="22" height="16" viewBox="0 0 22 16"><path d="M3.2,5 L9.8,11.5 L16.4,5" fill="none" stroke="#333" stroke-width="2.5" stroke-linecap="round" stroke-linejoin="round"/></svg>
<div class="t" style="left:1638.59px;top:905.77px;font-size:16.57px;font-weight:700;color:#606060;transform:scaleX(1.0271);">FY 23-24</div>
<svg class="r" style="left:1718px;top:906px" width="22" height="16" viewBox="0 0 22 16"><path d="M3.2,5 L9.8,11.5 L16.4,5" fill="none" stroke="#333" stroke-width="2.5" stroke-linecap="round" stroke-linejoin="round"/></svg>
<div class="t" style="left:2366.49px;top:905.77px;font-size:16.57px;font-weight:700;color:#606060;transform:scaleX(1.0271);">FY 23-24</div>
<svg class="r" style="left:2446px;top:906px" width="22" height="16" viewBox="0 0 22 16"><path d="M3.2,5 L9.8,11.5 L16.4,5" fill="none" stroke="#333" stroke-width="2.5" stroke-linecap="round" stroke-linejoin="round"/></svg>
<div class="t" style="left:382.64px;top:969.27px;font-size:44.33px;font-weight:700;color:#2266e2;transform:scaleX(0.9919);">$98.62k</div>
<div class="t" style="left:777.69px;top:969.27px;font-size:44.33px;font-weight:700;color:#2266e2;transform:scaleX(0.9106);">$3.17M</div>
<div class="t" style="left:1110.69px;top:969.27px;font-size:44.33px;font-weight:700;color:#2266e2;transform:scaleX(0.9225);">$1.98</div>
<div class="t" style="left:1523.54px;top:969.27px;font-size:44.33px;font-weight:700;color:#2266e2;transform:scaleX(0.9882);">$76.65</div>
<div class="t" style="left:1838.04px;top:969.27px;font-size:44.33px;font-weight:700;color:#2266e2;transform:scaleX(0.9860);">$7.4M</div>
<div class="t" style="left:2281.63px;top:969.27px;font-size:44.33px;font-weight:700;color:#2266e2;transform:scaleX(1.0100);">$89.39M</div>
<div class="t" style="left:382.80px;top:1032.31px;font-size:19.48px;font-weight:400;color:#6f6f6f;transform:scaleX(1.0219);">Actual Spend in Oct 2024</div>
<div class="t" style="left:778.30px;top:1032.31px;font-size:19.48px;font-weight:400;color:#6f6f6f;transform:scaleX(0.9943);">Actual Spend in FY 23-24</div>
<div class="t" style="left:1110.80px;top:1032.31px;font-size:19.48px;font-weight:400;color:#6f6f6f;transform:scaleX(1.0117);">Avg. Spend in Oct 2024</div>
<div class="t" style="left:1524.20px;top:1032.31px;font-size:19.48px;font-weight:400;color:#6f6f6f;transform:scaleX(0.9807);">Avg. Spend in FY 23-24</div>
<div class="t" style="left:1837.69px;top:1032.31px;font-size:19.48px;font-weight:400;color:#6f6f6f;transform:scaleX(1.0387);">Cost in Oct 2024</div>
<div class="t" style="left:2281.33px;top:1032.31px;font-size:19.48px;font-weight:400;color:#6f6f6f;">Cost in FY 23-24</div>
<div class="r" style="left:370.3px;top:1087.5px;width:38.0px;height:252.5px;background:#e8effc;border-radius:5px;"></div>
<div class="r" style="left:370.3px;top:1133.5px;width:38.0px;height:206.5px;background:#c47cfb;border-radius:5px;"></div>
<div class="t" style="left:373.17px;top:1351.51px;font-size:15.70px;font-weight:400;color:#6b6b6b;transform:scaleX(1.1425);">Nov</div>
<div class="r" style="left:427.07px;top:1087.5px;width:38.0px;height:252.5px;background:#e8effc;border-radius:5px;"></div>
<div class="r" style="left:427.07px;top:1259px;width:38.0px;height:81px;background:#c47cfb;border-radius:5px;"></div>
<div class="t" style="left:430.11px;top:1351.51px;font-size:15.70px;font-weight:400;color:#6b6b6b;transform:scaleX(1.1425);">Dec</div>
<div class="r" style="left:483.84px;top:1087.5px;width:38.00000000000006px;height:252.5px;background:#e8effc;border-radius:5px;"></div>
<div class="r" style="left:483.84px;top:1240.2px;width:38.00000000000006px;height:99.79999999999995px;background:#c47cfb;border-radius:5px;"></div>
<div class="t" style="left:489.31px;top:1351.51px;font-size:15.70px;font-weight:400;color:#6b6b6b;transform:scaleX(1.1425);">Jan</div>
<div class="r" style="left:540.61px;top:1087.5px;width:38.0px;height:252.5px;background:#e8effc;border-radius:5px;"></div>
<div class="r" style="left:540.61px;top:1212.6px;width:38.0px;height:127.40000000000009px;background:#c47cfb;border-radius:5px;"></div>
<div class="t" style="left:544.33px;top:1351.51px;font-size:15.70px;font-weight:400;color:#6b6b6b;transform:scaleX(1.1425);">Feb</div>
<div class="r" style="left:597.38px;top:1087.5px;width:38.0px;height:252.5px;background:#e8effc;border-radius:5px;"></div>
<div class="r" style="left:597.38px;top:1249.6px;width:38.0px;height:90.40000000000009px;background:#c47cfb;border-radius:5px;"></div>
<div class="t" style="left:600.83px;top:1351.51px;font-size:15.70px;font-weight:400;color:#6b6b6b;transform:scaleX(1.1425);">Mar</div>
<div class="r" style="left:654.15px;top:1087.5px;width:38.0px;height:252.5px;background:#e8effc;border-radius:5px;"></div>
<div class="r" style="left:654.15px;top:1218.8px;width:38.0px;height:121.20000000000005px;background:#c47cfb;border-radius:5px;"></div>
<div class="t" style="left:659.80px;top:1351.51px;font-size:15.70px;font-weight:400;color:#6b6b6b;transform:scaleX(1.1425);">Apr</div>
<div class="r" style="left:710.92px;top:1087.5px;width:38.0px;height:252.5px;background:#e8effc;border-radius:5px;"></div>
<div class="r" style="left:710.92px;top:1251.9px;width:38.0px;height:88.09999999999991px;background:#c47cfb;border-radius:5px;"></div>
<div class="t" style="left:712.75px;top:1351.51px;font-size:15.70px;font-weight:400;color:#6b6b6b;transform:scaleX(1.1425);">May</div>
<div class="r" style="left:767.69px;top:1087.5px;width:38.0px;height:252.5px;background:#e8effc;border-radius:5px;"></div>
<div class="r" style="left:767.69px;top:1204px;width:38.0px;height:136px;background:#c47cfb;border-radius:5px;"></div>
<div class="t" style="left:773.16px;top:1351.51px;font-size:15.70px;font-weight:400;color:#6b6b6b;transform:scaleX(1.1425);">Jun</div>
<div class="r" style="left:824.46px;top:1087.5px;width:38.0px;height:252.5px;background:#e8effc;border-radius:5px;"></div>
<div class="r" style="left:824.46px;top:1236.8px;width:38.0px;height:103.20000000000005px;background:#c47cfb;border-radius:5px;"></div>
<div class="t" style="left:832.97px;top:1351.51px;font-size:15.70px;font-weight:400;color:#6b6b6b;transform:scaleX(1.1425);">Jul</div>
<div class="r" style="left:881.23px;top:1087.5px;width:38.0px;height:252.5px;background:#e8effc;border-radius:5px;"></div>
<div class="r" style="left:881.23px;top:1220.3px;width:38.0px;height:119.70000000000005px;background:#c47cfb;border-radius:5px;"></div>
<div class="t" style="left:885.31px;top:1351.51px;font-size:15.70px;font-weight:400;color:#6b6b6b;transform:scaleX(1.1425);">Aug</div>
<div class="r" style="left:938.0px;top:1087.5px;width:38.0px;height:252.5px;background:#e8effc;border-radius:5px;"></div>
<div class="r" style="left:938.0px;top:1221.1px;width:38.0px;height:118.90000000000009px;background:#c47cfb;border-radius:5px;"></div>
<div class="t" style="left:941.49px;top:1351.51px;font-size:15.70px;font-weight:400;color:#6b6b6b;transform:scaleX(1.1425);">Sep</div>
<div class="r" style="left:994.77px;top:1087.5px;width:38.0px;height:252.5px;background:#e8effc;border-radius:5px;"></div>
<div class="r" style="left:994.77px;top:1298.1px;width:38.0px;height:41.90000000000009px;background:#c47cfb;border-radius:5px;"></div>
<div class="t" style="left:999.97px;top:1351.51px;font-size:15.70px;font-weight:400;color:#6b6b6b;transform:scaleX(1.1425);">Oct</div>
<div class="r" style="left:361.2px;top:1339px;width:681.3px;height:2px;background:#9e9e9e;"></div>
<div class="r" style="left:1097.3px;top:1087.5px;width:38.0px;height:252.5px;background:#e8effc;border-radius:5px;"></div>
<div class="r" style="left:1097.3px;top:1080px;width:38.0px;height:260px;background:#fdda7b;border-radius:5px;"></div>
<div class="t" style="left:1100.17px;top:1351.51px;font-size:15.70px;font-weight:400;color:#6b6b6b;transform:scaleX(1.1425);">Nov</div>
<div class="r" style="left:1154.07px;top:1087.5px;width:38.0px;height:252.5px;background:#e8effc;border-radius:5px;"></div>
<div class="r" style="left:1154.07px;top:1245.3px;width:38.0px;height:94.70000000000005px;background:#fdda7b;border-radius:5px;"></div>
<div class="t" style="left:1157.11px;top:1351.51px;font-size:15.70px;font-weight:400;color:#6b6b6b;transform:scaleX(1.1425);">Dec</div>
<div class="r" style="left:1210.84px;top:1087.5px;width:38.0px;height:252.5px;background:#e8effc;border-radius:5px;"></div>
<div class="r" style="left:1210.84px;top:1218.3px;width:38.0px;height:121.70000000000005px;background:#fdda7b;border-radius:5px;"></div>
<div class="t" style="left:1216.31px;top:1351.51px;font-size:15.70px;font-weight:400;color:#6b6b6b;transform:scaleX(1.1425);">Jan</div>
<div class="r" style="left:1267.61px;top:1087.5px;width:38.0px;height:252.5px;background:#e8effc;border-radius:5px;"></div>
<div class="r" style="left:1267.61px;top:1183.2px;width:38.0px;height:156.79999999999995px;background:#fdda7b;border-radius:5px;"></div>
<div class="t" style="left:1271.33px;top:1351.51px;font-size:15.70px;font-weight:400;color:#6b6b6b;transform:scaleX(1.1425);">Feb</div>
<div class="r" style="left:1324.38px;top:1087.5px;width:38.0px;height:252.5px;background:#e8effc;border-radius:5px;"></div>
<div class="r" style="left:1324.38px;top:1231.1px;width:38.0px;height:108.90000000000009px;background:#fdda7b;border-radius:5px;"></div>
<div class="t" style="left:1327.83px;top:1351.51px;font-size:15.70px;font-weight:400;color:#6b6b6b;transform:scaleX(1.1425);">Mar</div>
<div class="r" style="left:1381.15px;top:1087.5px;width:38.0px;height:252.5px;background:#e8effc;border-radius:5px;"></div>
<div class="r" style="left:1381.15px;top:1195.4px;width:38.0px;height:144.5999999999999px;background:#fdda7b;border-radius:5px;"></div>
<div class="t" style="left:1386.80px;top:1351.51px;font-size:15.70px;font-weight:400;color:#6b6b6b;transform:scaleX(1.1425);">Apr</div>
<div class="r" style="left:1437.92px;top:1087.5px;width:38.0px;height:252.5px;background:#e8effc;border-radius:5px;"></div>
<div class="r" style="left:1437.92px;top:1235.4px;width:38.0px;height:104.59999999999991px;background:#fdda7b;border-radius:5px;"></div>
<div class="t" style="left:1439.75px;top:1351.51px;font-size:15.70px;font-weight:400;color:#6b6b6b;transform:scaleX(1.1425);">May</div>
<div class="r" style="left:1494.69px;top:1087.5px;width:38.0px;height:252.5px;background:#e8effc;border-radius:5px;"></div>
<div class="r" style="left:1494.69px;top:1170.6px;width:38.0px;height:169.4000000000001px;background:#fdda7b;border-radius:5px;"></div>
<div class="t" style="left:1500.16px;top:1351.51px;font-size:15.70px;font-weight:400;color:#6b6b6b;transform:scaleX(1.1425);">Jun</div>
<div class="r" style="left:1551.46px;top:1087.5px;width:38.0px;height:252.5px;background:#e8effc;border-radius:5px;"></div>
<div class="r" style="left:1551.46px;top:1216px;width:38.0px;height:124px;background:#fdda7b;border-radius:5px;"></div>
<div class="t" style="left:1559.97px;top:1351.51px;font-size:15.70px;font-weight:400;color:#6b6b6b;transform:scaleX(1.1425);">Jul</div>
<div class="r" style="left:1608.23px;top:1087.5px;width:38.0px;height:252.5px;background:#e8effc;border-radius:5px;"></div>
<div class="r" style="left:1608.23px;top:1197.2px;width:38.0px;height:142.79999999999995px;background:#fdda7b;border-radius:5px;"></div>
<div class="t" style="left:1612.31px;top:1351.51px;font-size:15.70px;font-weight:400;color:#6b6b6b;transform:scaleX(1.1425);">Aug</div>
<div class="r" style="left:1665.0px;top:1087.5px;width:38.0px;height:252.5px;background:#e8effc;border-radius:5px;"></div>
<div class="r" style="left:1665.0px;top:1197.7px;width:38.0px;height:142.29999999999995px;background:#fdda7b;border-radius:5px;"></div>
<div class="t" style="left:1668.49px;top:1351.51px;font-size:15.70px;font-weight:400;color:#6b6b6b;transform:scaleX(1.1425);">Sep</div>
<div class="r" style="left:1721.77px;top:1087.5px;width:38.0px;height:252.5px;background:#e8effc;border-radius:5px;"></div>
<div class="r" style="left:1721.77px;top:1298.7px;width:38.0px;height:41.299999999999955px;background:#fdda7b;border-radius:5px;"></div>
<div class="t" style="left:1726.97px;top:1351.51px;font-size:15.70px;font-weight:400;color:#6b6b6b;transform:scaleX(1.1425);">Oct</div>
<div class="r" style="left:1088.2px;top:1339px;width:681.3px;height:2px;background:#9e9e9e;"></div>
<div class="r" style="left:1825.3px;top:1087.5px;width:38.0px;height:252.5px;background:#e8effc;border-radius:5px;"></div>
<div class="r" style="left:1825.3px;top:1104.1px;width:38.0px;height:235.9000000000001px;background:#a4e4a4;border-radius:5px;"></div>
<div class="t" style="left:1828.17px;top:1351.51px;font-size:15.70px;font-weight:400;color:#6b6b6b;transform:scaleX(1.1425);">Nov</div>
<div class="r" style="left:1882.07px;top:1087.5px;width:38.0px;height:252.5px;background:#e8effc;border-radius:5px;"></div>
<div class="r" style="left:1882.07px;top:1104.1px;width:38.0px;height:235.9000000000001px;background:#a4e4a4;border-radius:5px;"></div>
<div class="t" style="left:1885.11px;top:1351.51px;font-size:15.70px;font-weight:400;color:#6b6b6b;transform:scaleX(1.1425);">Dec</div>
<div class="r" style="left:1938.84px;top:1087.5px;width:38.0px;height:252.5px;background:#e8effc;border-radius:5px;"></div>
<div class="r" style="left:1938.84px;top:1102.9px;width:38.0px;height:237.0999999999999px;background:#a4e4a4;border-radius:5px;"></div>
<div class="t" style="left:1944.31px;top:1351.51px;font-size:15.70px;font-weight:400;color:#6b6b6b;transform:scaleX(1.1425);">Jan</div>
<div class="r" style="left:1995.61px;top:1087.5px;width:38.0px;height:252.5px;background:#e8effc;border-radius:5px;"></div>
<div class="r" style="left:1995.61px;top:1102.9px;width:38.0px;height:237.0999999999999px;background:#a4e4a4;border-radius:5px;"></div>
<div class="t" style="left:1999.33px;top:1351.51px;font-size:15.70px;font-weight:400;color:#6b6b6b;transform:scaleX(1.1425);">Feb</div>
<div class="r" style="left:2052.38px;top:1087.5px;width:38.0px;height:252.5px;background:#e8effc;border-radius:5px;"></div>
<div class="r" style="left:2052.38px;top:1102.9px;width:38.0px;height:237.0999999999999px;background:#a4e4a4;border-radius:5px;"></div>
<div class="t" style="left:2055.83px;top:1351.51px;font-size:15.70px;font-weight:400;color:#6b6b6b;transform:scaleX(1.1425);">Mar</div>
<div class="r" style="left:2109.15px;top:1087.5px;width:38.0px;height:252.5px;background:#e8effc;border-radius:5px;"></div>
<div class="r" style="left:2109.15px;top:1102.9px;width:38.0px;height:237.0999999999999px;background:#a4e4a4;border-radius:5px;"></div>
<div class="t" style="left:2114.80px;top:1351.51px;font-size:15.70px;font-weight:400;color:#6b6b6b;transform:scaleX(1.1425);">Apr</div>
<div class="r" style="left:2165.92px;top:1087.5px;width:38.0px;height:252.5px;background:#e8effc;border-radius:5px;"></div>
<div class="r" style="left:2165.92px;top:1106.5px;width:38.0px;height:233.5px;background:#a4e4a4;border-radius:5px;"></div>
<div class="t" style="left:2167.75px;top:1351.51px;font-size:15.70px;font-weight:400;color:#6b6b6b;transform:scaleX(1.1425);">May</div>
<div class="r" style="left:2222.69px;top:1087.5px;width:38.0px;height:252.5px;background:#e8effc;border-radius:5px;"></div>
<div class="r" style="left:2222.69px;top:1106.5px;width:38.0px;height:233.5px;background:#a4e4a4;border-radius:5px;"></div>
<div class="t" style="left:2228.16px;top:1351.51px;font-size:15.70px;font-weight:400;color:#6b6b6b;transform:scaleX(1.1425);">Jun</div>
<div class="r" style="left:2279.46px;top:1087.5px;width:38.0px;height:252.5px;background:#e8effc;border-radius:5px;"></div>
<div class="r" style="left:2279.46px;top:1106.5px;width:38.0px;height:233.5px;background:#a4e4a4;border-radius:5px;"></div>
<div class="t" style="left:2287.97px;top:1351.51px;font-size:15.70px;font-weight:400;color:#6b6b6b;transform:scaleX(1.1425);">Jul</div>
<div class="r" style="left:2336.23px;top:1087.5px;width:38.0px;height:252.5px;background:#e8effc;border-radius:5px;"></div>
<div class="r" style="left:2336.23px;top:1106.9px;width:38.0px;height:233.0999999999999px;background:#a4e4a4;border-radius:5px;"></div>
<div class="t" style="left:2340.31px;top:1351.51px;font-size:15.70px;font-weight:400;color:#6b6b6b;transform:scaleX(1.1425);">Aug</div>
<div class="r" style="left:2393.0px;top:1087.5px;width:38.0px;height:252.5px;background:#e8effc;border-radius:5px;"></div>
<div class="r" style="left:2393.0px;top:1106.9px;width:38.0px;height:233.0999999999999px;background:#a4e4a4;border-radius:5px;"></div>
<div class="t" style="left:2396.49px;top:1351.51px;font-size:15.70px;font-weight:400;color:#6b6b6b;transform:scaleX(1.1425);">Sep</div>
<div class="r" style="left:2449.77px;top:1087.5px;width:38.0px;height:252.5px;background:#e8effc;border-radius:5px;"></div>
<div class="r" style="left:2449.77px;top:1106.9px;width:38.0px;height:233.0999999999999px;background:#a4e4a4;border-radius:5px;"></div>
<div class="t" style="left:2454.97px;top:1351.51px;font-size:15.70px;font-weight:400;color:#6b6b6b;transform:scaleX(1.1425);">Oct</div>
<div class="r" style="left:1816.2px;top:1339px;width:681.3px;height:2px;background:#9e9e9e;"></div>
</body></html>
